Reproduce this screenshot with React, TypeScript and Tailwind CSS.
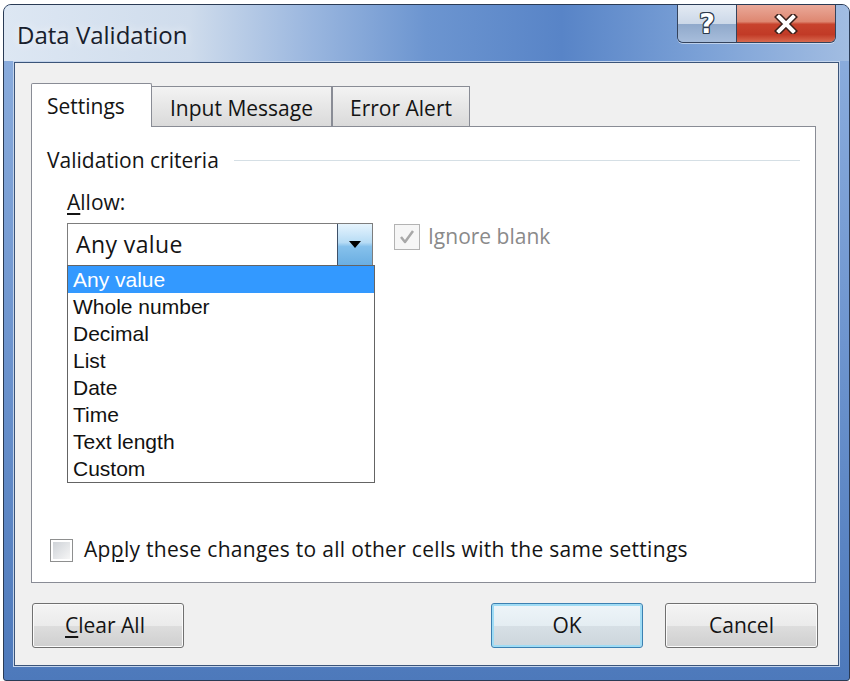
import React from "react";

const items = ["Any value", "Whole number", "Decimal", "List", "Date", "Time", "Text length", "Custom"];

function CloseGlyph() {
  return (
    <svg width="26" height="20" viewBox="0 0 26 20">
      <path d="M6 3 L20 17 M20 3 L6 17" stroke="#3a1f1a" strokeWidth="7" strokeLinecap="square" fill="none" />
      <path d="M6 3 L20 17 M20 3 L6 17" stroke="#ffffff" strokeWidth="4" strokeLinecap="square" fill="none" />
    </svg>
  );
}

function Check({ color }: { color: string }) {
  return (
    <svg width="18" height="18" viewBox="0 0 18 18">
      <path d="M3 9 L7 14 L15 3" stroke={color} strokeWidth="2.5" fill="none" strokeLinejoin="round" />
    </svg>
  );
}

export default function App() {
  return (
    <div className="w-[850px] h-[681px] bg-white pl-[3px] pt-[4px] font-['Open_Sans','Noto_Sans',sans-serif] text-[#141414]">
      <div className="w-[847px] h-[677px] rounded-t-[8px] rounded-b-[3px] border border-[#2a3b55] bg-linear-to-b from-[#8fb0df] via-[#6e95cf] to-[#4d79bb] flex flex-col overflow-hidden">
        {/* title bar */}
        <div className="h-[56px] shrink-0 flex justify-between items-start bg-[linear-gradient(90deg,#dde7f3_0%,#cfdcec_22%,#9bb7df_36%,#6c95d0_50%,#5884c7_66%,#7aa0d6_82%,#a2bde2_100%)]">
          <div className="ml-[13px] mt-[14px] text-[24px] leading-[32px] text-[#18202c] [text-shadow:0_0_10px_rgba(255,255,255,0.9)]">
            Data Validation
          </div>
          <div className="mr-[13px] flex h-[38px] border border-t-0 border-[#34435c] rounded-b-[6px] overflow-hidden shadow-[0_1px_0_rgba(255,255,255,0.5)]">
            <div className="w-[58px] h-full flex items-center justify-center bg-[linear-gradient(180deg,#e3eaf3_0%,#ccd8e8_50%,#90a9cb_52%,#a7bddb_100%)] text-white font-bold text-[27px] leading-none font-['DejaVu_Sans',sans-serif] [text-shadow:1px_0_#2d3a4d,-1px_0_#2d3a4d,0_1px_#2d3a4d,0_-1px_#2d3a4d,1px_1px_#2d3a4d,-1px_-1px_#2d3a4d,1px_-1px_#2d3a4d,-1px_1px_#2d3a4d]">
              ?
            </div>
            <div className="w-[99px] h-full border-l border-[#34435c] flex items-center justify-center bg-[linear-gradient(180deg,#eaa999_0%,#de8771_45%,#c8432d_52%,#c13a26_80%,#d8694f_100%)]">
              <CloseGlyph />
            </div>
          </div>
        </div>
        {/* client */}
        <div className="mx-[10px] mt-[1px] h-[604px] shrink-0 border border-[#3b5479] bg-[#f0f0f0] shadow-[0_0_0_1px_#c3d4ec] flex flex-col pl-[16px] pr-[22px] pt-[20px]">
          {/* tabs */}
          <div className="h-[43px] flex items-end relative z-10 text-[21px]">
            <div className="w-[121px] h-[44px] -mb-px bg-white border border-b-0 border-[#898c95] rounded-t-[2px] flex items-center pl-[15px] pt-[3px]">
              Settings
            </div>
            <div className="w-[180px] h-[40px] border-t border-r border-[#898c95] bg-linear-to-b from-[#f3f3f3] to-[#dadada] flex items-center justify-center pt-[5px]">
              Input Message
            </div>
            <div className="w-[138px] h-[40px] border-t border-r border-l border-[#898c95] bg-linear-to-b from-[#f3f3f3] to-[#dadada] flex items-center justify-center pt-[5px]">
              Error Alert
            </div>
          </div>
          {/* panel */}
          <div className="w-[785px] h-[457px] shrink-0 border border-[#898c95] bg-white flex flex-col text-[21px]">
            <div className="mt-[19px] h-[28px] flex items-center pl-[15px] pr-[15px]">
              <span className="leading-none">Validation criteria</span>
              <div className="ml-[15px] flex-1 h-px bg-[#d5dfe5]" />
            </div>
            <div className="mt-[15px] h-[28px] flex items-center pl-[35px]">
              <span><span className="underline underline-offset-[3px]">A</span>llow:</span>
            </div>
            <div className="mt-[6px] pl-[35px] flex items-start">
              <div className="relative w-[306px] h-[43px] border border-[#7d7d7d] bg-white flex items-center">
                <span className="pl-[8px] flex-1 text-[23px] tracking-[0.4px]">Any value</span>
                <div className="w-[35px] h-full border-l border-[#3e5068] bg-[linear-gradient(180deg,#e6f4fd_0%,#b7dcf5_45%,#86c1ec_55%,#6aaee2_100%)] flex items-center justify-center">
                  <svg width="12" height="7" viewBox="0 0 12 7"><path d="M0 0 H12 L6 7 Z" fill="#000" /></svg>
                </div>
                <div className="absolute left-[-1px] top-full w-[308px] h-[218px] border border-[#646464] bg-white font-['Liberation_Sans',Arial,sans-serif] text-[21px] z-20">
                  {items.map((it, i) => (
                    <div key={it} className={i === 0 ? "h-[27px] leading-[27px] pl-[5px] bg-[#3399ff] text-white" : "h-[27px] leading-[27px] pl-[5px] text-[#111]"}>
                      {it}
                    </div>
                  ))}
                </div>
              </div>
              <div className="ml-[21px] mt-[1px] h-[26px] flex items-center gap-[8px] text-[#8a8a8a]">
                <div className="w-[26px] h-[26px] border border-[#b3b3b3] bg-[#f6f6f6] flex items-center justify-center">
                  <Check color="#a8a8a8" />
                </div>
                <span>Ignore blank</span>
              </div>
            </div>
            <div className="mt-auto mb-[20px] pl-[18px] h-[24px] flex items-center gap-[11px]">
              <div className="w-[23px] h-[23px] border border-[#8e8f8f] bg-white p-[2px]">
                <div className="w-full h-full bg-linear-to-br from-[#cfd3d8] to-[#f6f6f6]" />
              </div>
              <span className="tracking-[0.3px]">Ap<span className="underline underline-offset-[3px]">p</span>ly these changes to all other cells with the same settings</span>
            </div>
          </div>
          {/* buttons */}
          <div className="mt-[20px] h-[45px] flex items-center pl-[1px] -mr-[2px] text-[21px]">
            <button className="w-[152px] h-[45px] border border-[#707070] rounded-[3px] bg-[linear-gradient(180deg,#f4f4f4_0%,#ebebeb_50%,#dddddd_52%,#cfcfcf_100%)] shadow-[inset_0_0_0_1px_#fbfbfb] pr-[6px]">
              <span className="underline underline-offset-[3px]">C</span>lear All
            </button>
            <div className="flex-1" />
            <button className="w-[152px] h-[45px] border border-[#3c80b1] rounded-[3px] bg-[linear-gradient(180deg,#eef5f9_0%,#e4edf2_50%,#d6dfe5_52%,#cdd6dc_100%)] shadow-[inset_0_0_0_2px_#9fdcf5]">
              OK
            </button>
            <button className="ml-[22px] w-[153px] h-[45px] border border-[#707070] rounded-[3px] bg-[linear-gradient(180deg,#f4f4f4_0%,#ebebeb_50%,#dddddd_52%,#cfcfcf_100%)] shadow-[inset_0_0_0_1px_#fbfbfb]">
              Cancel
            </button>
          </div>
        </div>
      </div>
    </div>
  );
}
